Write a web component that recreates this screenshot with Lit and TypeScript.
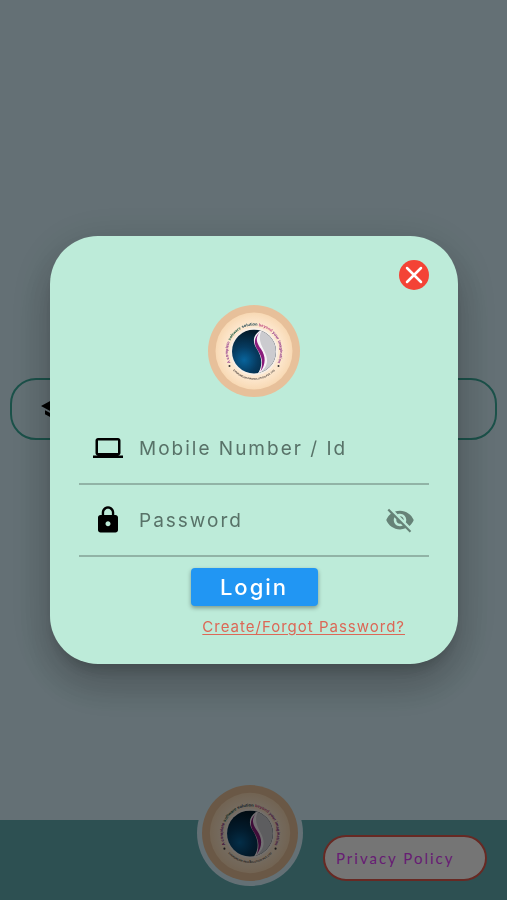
import { LitElement, html, css, svg } from "lit";
import { customElement, state } from "lit/decorators.js";

const icons = {
  laptop: svg`<path d="M20 18c1.1 0 1.99-.9 1.99-2L22 6c0-1.100-.9-2-2-2H4c-1.100 0-2 .9-2 2v10c0 1.100.9 2 2 2H0v2h24v-2h-4zM4 6h16v10H4V6z"/>`,
  lock: svg`<path d="M18 8h-1V6c0-2.760-2.240-5-5-5S7 3.240 7 6v2H6c-1.100 0-2 .9-2 2v10c0 1.100.9 2 2 2h12c1.100 0 2-.9 2-2V10c0-1.100-.9-2-2-2zm-6 9c-1.100 0-2-.9-2-2s.9-2 2-2 2 .9 2 2-.9 2-2 2zm3.100-9H8.900V6c0-1.710 1.390-3.100 3.100-3.100 1.710 0 3.100 1.390 3.100 3.100v2z"/>`,
  eyeOff: svg`<path d="M12 7c2.760 0 5 2.240 5 5 0 .65-.13 1.260-.36 1.830l2.920 2.920c1.510-1.260 2.700-2.890 3.430-4.750-1.730-4.390-6-7.500-11-7.500-1.400 0-2.740.25-3.980.7l2.160 2.160C10.740 7.130 11.350 7 12 7zM2 4.270l2.280 2.280.46.46C3.080 8.300 1.780 10.020 1 12c1.730 4.390 6 7.500 11 7.500 1.550 0 3.030-.3 4.380-.84l.42.42L19.730 22 21 20.730 3.270 3 2 4.270zM7.530 9.800l1.550 1.550c-.05.21-.08.43-.08.65 0 1.660 1.340 3 3 3 .22 0 .44-.03.65-.08l1.550 1.550c-.67.33-1.410.53-2.200.53-2.760 0-5-2.240-5-5 0-.79.2-1.530.53-2.200zm4.310-.78l3.150 3.150.02-.16c0-1.660-1.340-3-3-3l-.17.01z"/>`,
  school: svg`<path d="M5 13.180v4L12 21l7-3.820v-4L12 17l-7-3.820zM12 3L1 9l11 6 9-4.910V17h2V9L12 3z"/>`,
};

@customElement("brand-logo")
class BrandLogo extends LitElement {
  static styles = css`
    :host { display: block; }
    svg { display: block; width: 100%; height: auto; }
    .word { font: 700 8px "Liberation Sans", sans-serif; }
    .small { font: 700 5px "Liberation Sans", sans-serif; fill: #443a36; }
    .purple { fill: #8c2f86; }
    .green { fill: #17563f; }
    .navy { fill: #18414f; }
    .pink { fill: #c04a80; }
  `;
  render() {
    return html`<svg viewBox="0 0 184 184" role="img" aria-label="Company logo">
      <defs>
        <radialGradient id="cream"><stop offset="0.7" stop-color="#fde8cf"/><stop offset="1" stop-color="#f8d9b4"/></radialGradient>
        <radialGradient id="globe" cx="0.27" cy="0.68" r="0.65"><stop offset="0" stop-color="#08649c"/><stop offset="0.45" stop-color="#063b60"/><stop offset="1" stop-color="#041b2b"/></radialGradient>
        <clipPath id="disc"><circle cx="92" cy="93" r="44"/></clipPath>
        <path id="top" d="M47.900 120.600A52 52 0 1 1 136.100 120.600"/>
        <path id="bottom" d="M45 124A56 56 0 0 0 139 124"/>
      </defs>
      <circle cx="92" cy="92" r="92" fill="#e7c09a"/>
      <circle cx="92" cy="92" r="77" fill="url(#cream)"/>
      <circle cx="92" cy="93" r="48" fill="#f8efe6"/>
      <g clip-path="url(#disc)">
        <rect x="48" y="49" width="90" height="90" fill="url(#globe)"/>
        <path d="M108 49C92 60 96 77 104 91C113 108 111 124 97 140H140V49Z" fill="#cbcbcf"/>
        <path d="M108 49C91 58 88 71 96 85C108 103 111 120 99 139C119 126 123 111 112 91C104 76 100 65 108 49Z" fill="#f7f2f6"/>
        <path d="M104 54C93 66 98 77 106 88C116 103 116 118 105 133C111 116 108 104 100 91C91 78 91 66 104 54Z" fill="#8a1c7c"/>
      </g>
      <text class="word"><textPath href="#top" startOffset="50%" text-anchor="middle"><tspan class="purple">A complete </tspan><tspan class="green">software </tspan><tspan class="navy">solution </tspan><tspan class="pink">beyond </tspan><tspan class="purple">your imagination</tspan></textPath></text>
      <text class="small"><textPath href="#bottom" startOffset="50%" text-anchor="middle">EVERDREAM INFOSOLUTION PVT. LTD</textPath></text>
      <circle cx="43" cy="122" r="2" fill="#333"/>
      <circle cx="141" cy="122" r="2" fill="#333"/>
    </svg>`;
  }
}

@customElement("app-root")
class AppRoot extends LitElement {
  @state() private open = true;
  @state() private reveal = false;

  static styles = css`
    :host { display: block; font-family: "Inter", "Liberation Sans", sans-serif; }
    * { box-sizing: border-box; }
    button { font: inherit; cursor: pointer; border: 0; padding: 0; background: none; }
    svg { display: block; }
    .page { min-height: 100vh; display: flex; flex-direction: column; background: #d9f5ff; }
    .main { flex: 1; display: flex; align-items: center; padding: 0 10px 2px; }
    .choice { width: 100%; height: 62px; padding-left: 28px; display: flex; align-items: center; border: 2px solid #3bb0a0; border-radius: 26px; }
    .footer { height: 80px; display: grid; grid-template-columns: 1fr 106px 1fr; align-items: center; padding: 0 20px 0 12px; background: #62aeb4; }
    .badge { grid-column: 2; align-self: start; margin-top: -40px; padding: 5px; border-radius: 50%; background: #d9f5ff; }
    .policy { justify-self: end; width: 164px; height: 46px; padding-left: 11px; margin-bottom: 4px; text-align: left; font: 15px "Lato", sans-serif; letter-spacing: 2px; white-space: nowrap; color: #e040fb; background: #fff; border: 2px solid #e05a4e; border-radius: 23px; }
    .scrim { position: fixed; inset: 0; display: flex; align-items: center; padding: 20px 49px 20px 50px; background: rgba(0, 0, 0, 0.54); }
    .card { width: 100%; padding: 24px 29px 27px; display: flex; flex-direction: column; align-items: center; border-radius: 48px; background: #bdebd9; box-shadow: 0 11px 15px -7px rgba(0, 0, 0, 0.2), 0 24px 38px 3px rgba(0, 0, 0, 0.14), 0 9px 46px 8px rgba(0, 0, 0, 0.12); }
    .close { align-self: flex-end; width: 30px; height: 30px; border-radius: 50%; background: #f44336; }
    .logo { width: 92px; margin: 15px 0 16px; }
    .field { width: 100%; height: 72px; display: flex; align-items: center; gap: 16px; padding: 0 14px; border-bottom: 2px solid #91b3a6; }
    .field input { flex: 1; min-width: 0; border: 0; padding: 0; outline: 0; background: none; font: 19px "Inter", sans-serif; letter-spacing: 2px; color: #222; }
    .field input::placeholder { color: #587268; opacity: 1; }
    .eye { color: #668277; }
    .login { width: 127px; height: 38px; margin: 11px 0; border-radius: 4px; background: #2196f3; color: #fff; font-size: 22px; font-weight: 500; letter-spacing: 2px; box-shadow: 0 2px 4px rgba(0, 0, 0, 0.35); }
    .forgot { align-self: flex-end; margin-right: 24px; font-size: 15px; line-height: 20px; letter-spacing: 1px; white-space: nowrap; color: #dc6756; text-underline-offset: 2px; }
  `;

  render() {
    return html`
      <div class="page">
        <main class="main">
          <div class="choice"><svg width="24" height="24" viewBox="0 0 24 24">${icons.school}</svg></div>
        </main>
        <footer class="footer">
          <brand-logo class="badge"></brand-logo>
          <button class="policy">Privacy Policy</button>
        </footer>
      </div>
      ${this.open ? this.dialog() : null}
    `;
  }

  private dialog() {
    return html`<div class="scrim">
      <form class="card" role="dialog" aria-label="Login" @submit=${(e: Event) => e.preventDefault()}>
        <button class="close" type="button" aria-label="Close" @click=${() => (this.open = false)}>
          <svg width="30" height="30" viewBox="0 0 30 30" stroke="#fff" stroke-width="2.500" stroke-linecap="round"><path d="M8 8l14 14M22 8L8 22"/></svg>
        </button>
        <brand-logo class="logo"></brand-logo>
        <label class="field">
          <svg width="30" height="30" viewBox="0 0 24 24">${icons.laptop}</svg>
          <input type="text" placeholder="Mobile Number / Id" aria-label="Mobile Number / Id" />
        </label>
        <div class="field">
          <svg width="30" height="30" viewBox="0 0 24 24">${icons.lock}</svg>
          <input type=${this.reveal ? "text" : "password"} placeholder="Password" aria-label="Password" />
          <button class="eye" type="button" aria-label="Show password" @click=${() => (this.reveal = !this.reveal)}>
            <svg width="30" height="30" viewBox="0 0 24 24" fill="currentColor">${icons.eyeOff}</svg>
          </button>
        </div>
        <button class="login" type="submit">Login</button>
        <a class="forgot" href="#forgot">Create/Forgot Password?</a>
      </form>
    </div>`;
  }
}
